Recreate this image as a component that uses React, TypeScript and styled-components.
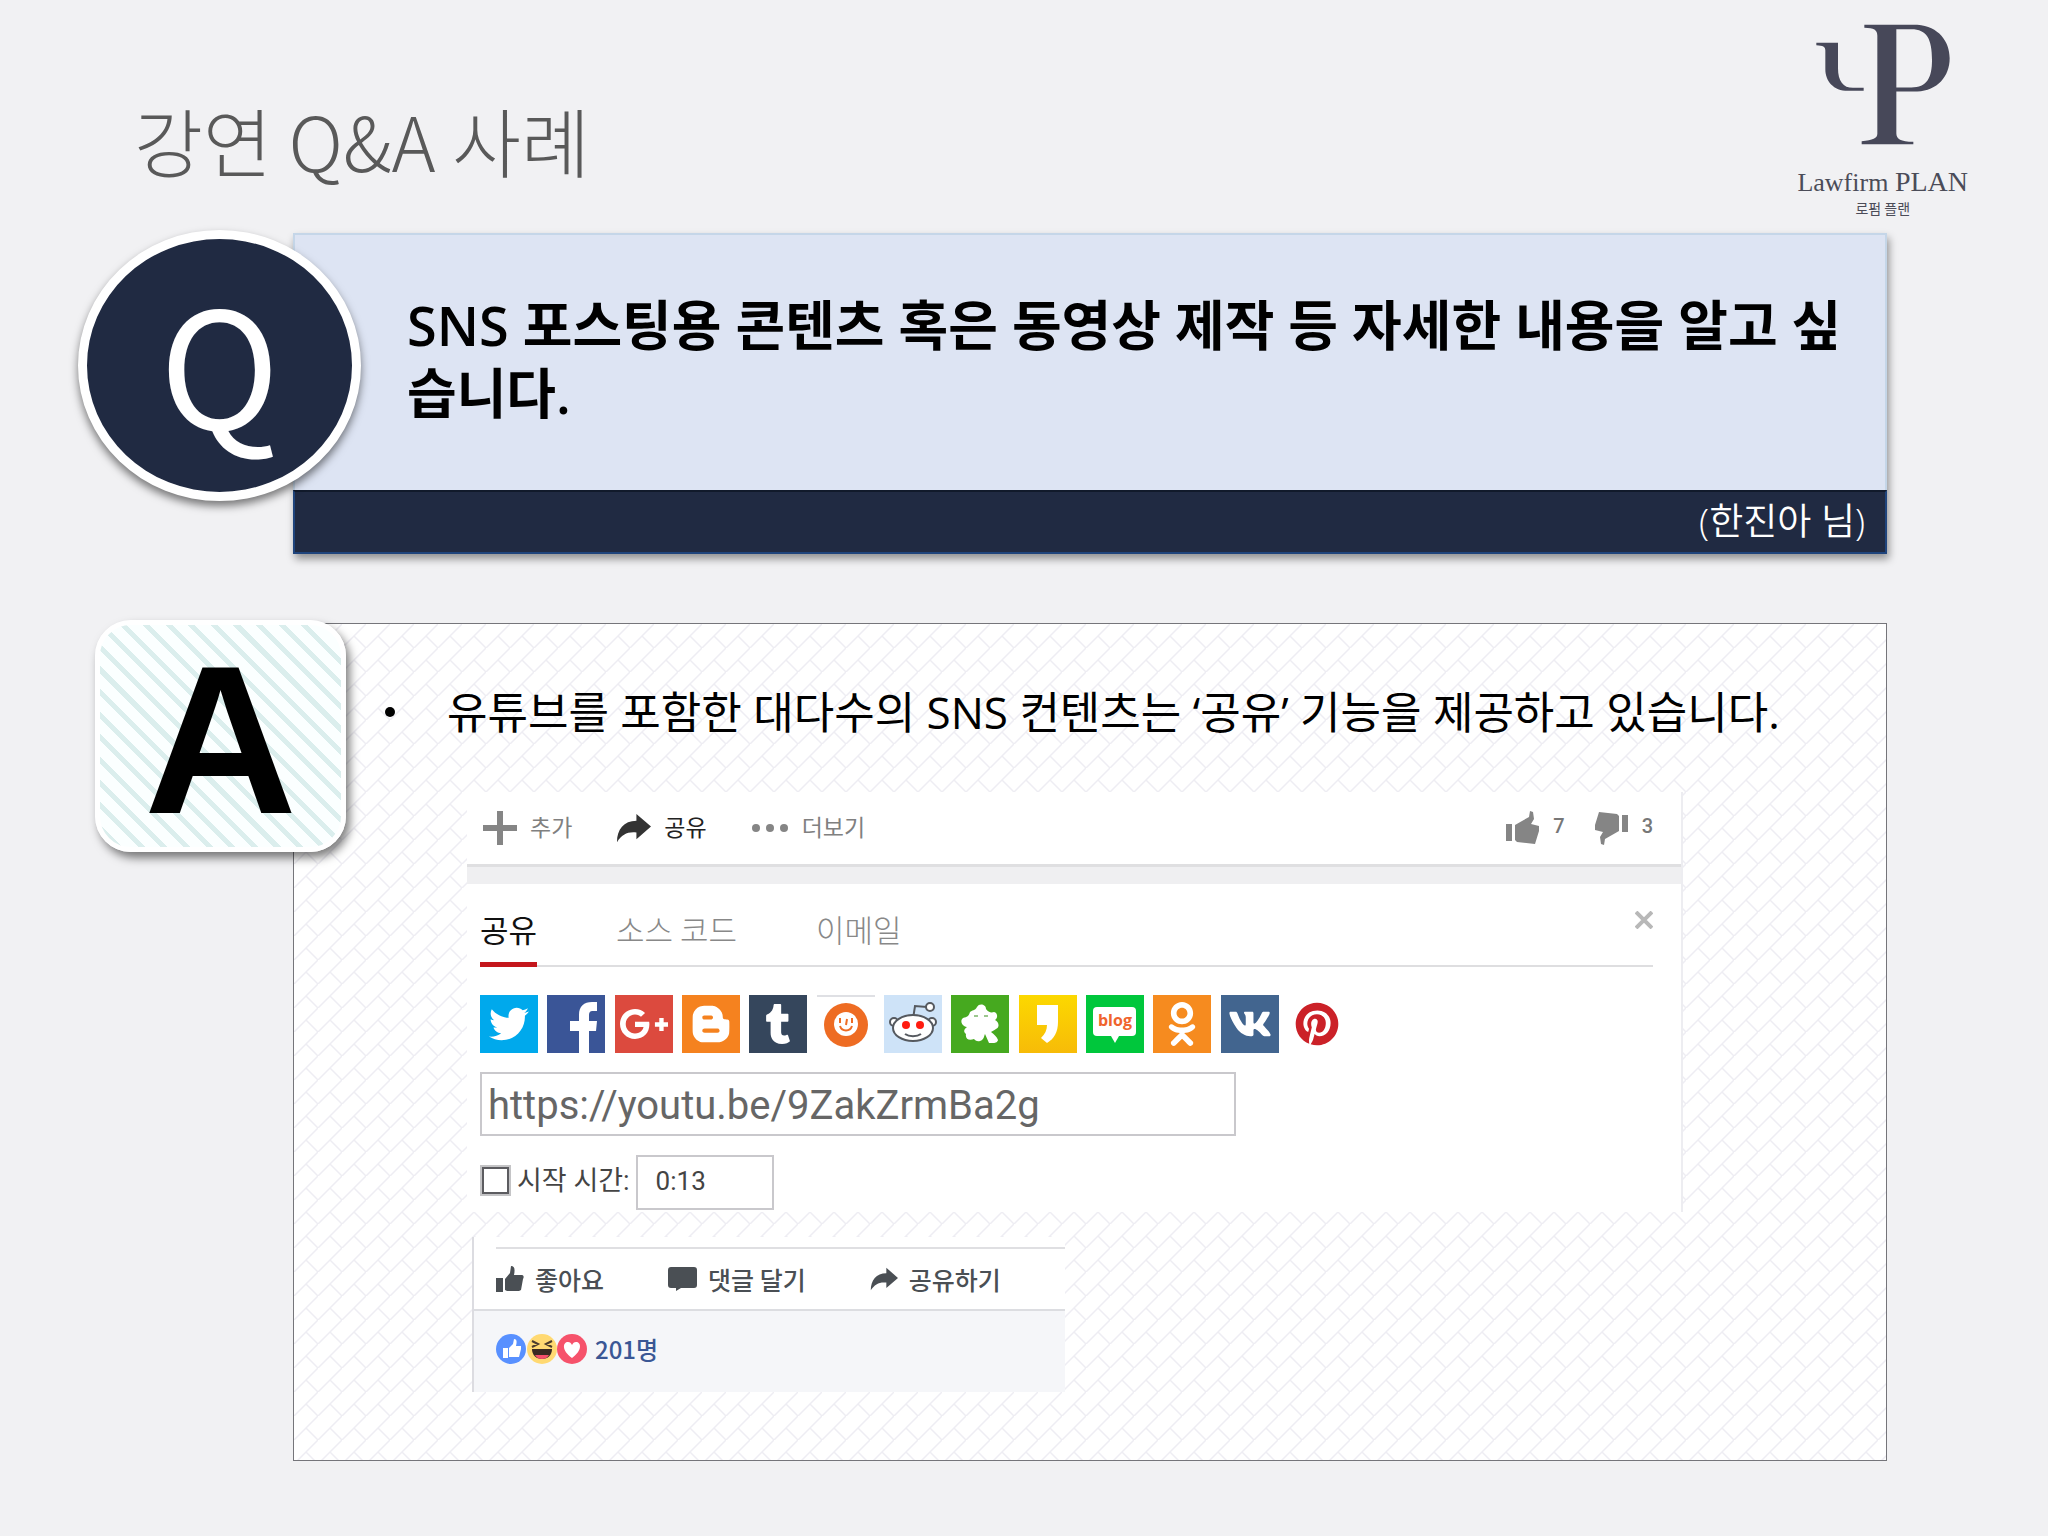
import React from 'react';
import styled, { createGlobalStyle } from 'styled-components';
import {
  FaTwitter,
  FaGooglePlusG,
  FaBloggerB,
  FaTumblr,
  FaOdnoklassniki,
  FaVk,
  FaPinterest,
} from 'react-icons/fa';

const sans = `'Noto Sans CJK KR', sans-serif`;
const humanist = `'Open Sans', 'Noto Sans CJK KR', sans-serif`;
const roboto = `Roboto, 'Noto Sans CJK KR', sans-serif`;

const brick = encodeURIComponent(
  `<svg xmlns="http://www.w3.org/2000/svg" width="24" height="24"><path d="M-2 26L26 -2M12 12L24 24" stroke="#eeedf3" stroke-width="1.5" fill="none"/></svg>`
);

const GlobalStyle = createGlobalStyle`
  *, *::before, *::after { box-sizing: border-box; }
  body { margin: 0; background: #f1f1f3; }
  h1, h2, p, ul { margin: 0; padding: 0; }
  button { border: 0; background: none; padding: 0; margin: 0; cursor: pointer; }
  svg { display: block; flex: none; }
`;

const Page = styled.main`
  display: flex;
  flex-direction: column;
  min-height: 100vh;
  padding-bottom: 75px;
  font-family: ${sans};
  color: #000;
`;

const Header = styled.header`
  display: flex;
  justify-content: space-between;
  align-items: flex-start;
  padding: 0 80px 15px 134px;
`;

const Title = styled.h1`
  padding-top: 90px;
  font-size: 75px;
  line-height: 100px;
  font-weight: 300;
  color: #595959;
`;

const Brand = styled.div`
  display: flex;
  flex-direction: column;
  align-items: center;
  padding-top: 24px;
  color: #4b4c58;
`;

const BrandName = styled.span`
  margin-top: 22px;
  font-family: 'Liberation Serif', serif;
  font-size: 26px;
  line-height: 30px;
`;

const BrandStrong = styled.span`
  font-size: 28px;
`;

const BrandSub = styled.span`
  font-size: 14px;
  line-height: 20px;
`;

const Content = styled.div`
  flex: 1;
  display: flex;
  flex-direction: column;
  gap: 69px;
  padding: 0 161px 0 293px;
`;

const Question = styled.section`
  position: relative;
  box-shadow: 2px 5px 8px rgba(0, 0, 0, 0.4);
`;

const QuestionText = styled.h2`
  padding: 56px 36px 63px 112px;
  border: 2px solid #c5d6e8;
  border-bottom: 0;
  background: #dde4f3;
  font-family: ${humanist};
  font-size: 54px;
  line-height: 68px;
  font-weight: 600;
  word-break: break-all;
`;

const Asker = styled.p`
  padding: 0 20px 2px;
  border: 2px solid #1f447c;
  border-top-color: #111a2b;
  background: #202a42;
  color: #fff;
  font-family: ${humanist};
  font-size: 37px;
  line-height: 58px;
  font-weight: 350;
  text-align: right;
`;

const QBadge = styled.div`
  position: absolute;
  left: -215px;
  top: -3px;
  width: 283px;
  height: 271px;
  display: flex;
  align-items: center;
  justify-content: center;
  padding-bottom: 12px;
  border: 9px solid #fff;
  border-radius: 50%;
  background: #202a42;
  color: #fff;
  font-size: 162px;
  line-height: 1;
  box-shadow: 0 5px 8px rgba(0, 0, 0, 0.5);
`;

const Answer = styled.section`
  position: relative;
  flex: 1;
  padding: 50px 203px 60px 173px;
  border: 1px solid #75757a;
  background: #fff url("data:image/svg+xml,${brick}");
`;

const ABadge = styled.div`
  position: absolute;
  left: -199px;
  top: -4px;
  width: 251px;
  height: 232px;
  display: flex;
  align-items: center;
  justify-content: center;
  padding-top: 8px;
  border: 5px solid #fff;
  border-radius: 36px;
  background: repeating-linear-gradient(45deg, #fbffff 0 11px, #dbeeed 11px 16px);
  font-family: 'Liberation Sans', sans-serif;
  font-size: 212px;
  line-height: 1;
  font-weight: 700;
  box-shadow: 4px 6px 10px rgba(0, 0, 0, 0.5);
`;

const Points = styled.ul`
  list-style: none;
  margin: 0 -140px 0 -82px;
`;

const Point = styled.li`
  display: flex;
  align-items: center;
  font-family: ${humanist};
  font-size: 44px;
  line-height: 76px;
  font-weight: 400;

  &::before {
    content: '';
    flex: none;
    width: 10px;
    height: 10px;
    margin-right: 52px;
    border-radius: 50%;
    background: #000;
  }
`;

const Video = styled.div`
  margin-top: 42px;
  border-right: 2px solid #ededf1;
  background: #fff;
`;

const VideoBar = styled.div`
  display: flex;
  align-items: center;
  justify-content: space-between;
  height: 75px;
  padding: 0 28px 0 16px;
  border-bottom: 3px solid #dfdfe1;
`;

const Group = styled.div<{ $gap: number }>`
  display: flex;
  align-items: center;
  gap: ${(p) => p.$gap}px;
`;

const BarButton = styled.button<{ $dark?: boolean }>`
  display: flex;
  align-items: center;
  gap: 13px;
  font-family: ${sans};
  font-size: 23px;
  line-height: 32px;
  color: ${(p) => (p.$dark ? '#222' : '#808080')};
`;

const Label = styled.span`
  padding-bottom: 5px;
`;

const Count = styled.span`
  padding-bottom: 4px;
  font-family: ${roboto};
  font-size: 20px;
  font-weight: 500;
  color: #777;
`;

const Band = styled.div`
  height: 17px;
  background: #efeff1;
`;

const SharePanel = styled.div`
  padding: 27px 28px 2px 13px;
`;

const Tabs = styled.div`
  display: flex;
  align-items: flex-start;
  gap: 79px;
  box-shadow: inset 0 -2px 0 #dedee0;
`;

const Tab = styled.button<{ $active?: boolean }>`
  padding-bottom: 16px;
  border-bottom: 5px solid ${(p) => (p.$active ? '#c4161c' : 'transparent')};
  font-family: ${sans};
  font-size: 31px;
  line-height: 35px;
  font-weight: ${(p) => (p.$active ? 400 : 300)};
  color: ${(p) => (p.$active ? '#111' : '#888')};
`;

const Close = styled.button`
  margin-left: auto;
  color: #b8b8b8;
`;

const Services = styled.div`
  display: flex;
  justify-content: space-between;
  max-width: 866px;
  margin: 28px 0 19px;
`;

const Service = styled.button<{ $bg: string }>`
  display: flex;
  align-items: center;
  justify-content: center;
  width: 58px;
  height: 58px;
  overflow: hidden;
  background: ${(p) => p.$bg};
  color: #fff;
`;

const BlogBubble = styled.span`
  position: relative;
  width: 43px;
  height: 29px;
  margin-bottom: 6px;
  border-radius: 4px;
  background: #fff;
  color: #f0642d;
  font: 700 16px/27px 'Open Sans', sans-serif;

  &::after {
    content: '';
    position: absolute;
    left: 18px;
    top: 29px;
    border: 4px solid transparent;
    border-top: 7px solid #fff;
    border-bottom: 0;
  }
`;

const UrlInput = styled.input`
  display: block;
  width: 756px;
  height: 64px;
  padding: 2px 6px 0;
  border: 2px solid #c9c8cc;
  background: #fff;
  color: #666;
  font-family: ${roboto};
  font-size: 40px;
`;

const StartRow = styled.div`
  display: flex;
  align-items: center;
  margin-top: 19px;
  color: #444;
  font-family: ${roboto};
  font-size: 27px;
`;

const StartLabel = styled.label`
  padding-bottom: 8px;
`;

const Check = styled.input`
  appearance: none;
  width: 31px;
  height: 31px;
  margin: 0 6px 5px 0;
  border: 2px solid #c4c4c6;
  background: #fff;
  box-shadow: inset 0 0 0 2px #5c5c60;
`;

const TimeInput = styled.input`
  width: 138px;
  height: 55px;
  margin-left: 6px;
  padding: 0 18px 4px;
  border: 2px solid #c9c8cc;
  background: #fff;
  color: #444;
  font-family: ${roboto};
  font-size: 26px;
`;

const Social = styled.div`
  width: 593px;
  margin-top: 25px;
  margin-left: 5px;
  padding-top: 10px;
  border-left: 2px solid #dcdce1;
  background: #fff;
`;

const SocialActions = styled.div`
  display: flex;
  align-items: center;
  gap: 64px;
  height: 62px;
  margin-left: 22px;
  border-top: 2px solid #dfdfe2;
`;

const SocialButton = styled.button`
  display: flex;
  align-items: center;
  gap: 11px;
  color: #4a4f54;
  font-family: ${sans};
  font-size: 25px;
  line-height: 32px;
  font-weight: 500;
`;

const Reactions = styled.div`
  display: flex;
  align-items: center;
  height: 83px;
  padding: 0 21px 6px;
  border-top: 2px solid #dcdde1;
  background: #f5f6f9;
`;

const ReactionCount = styled.a`
  margin-left: 8px;
  color: #3a5795;
  font-size: 24px;
  line-height: 32px;
  font-weight: 500;
  text-decoration: none;
`;

const LogoMark = () => (
  <svg width="134" height="121" viewBox="404 73 402 362" fill="#474859" aria-hidden="true">
    <path
      fillRule="evenodd"
      d="M549 75H708C772 80 805 125 805 175C805 230 768 272 708 275H645V400C645 418 658 425 696 426V433H541V424C575 421 588 416 588 402V108C588 90 578 85 549 84ZM645 88V263H690C737 263 752 235 752 180C752 118 737 88 690 88Z"
    />
    <path d="M405 129H470V205C470 243 485 264 515 264H547V273H500C456 273 432 243 432 208V152C432 140 425 137 405 136Z" />
  </svg>
);

const Plus = () => (
  <svg width="34" height="34" viewBox="0 0 34 34" fill="#858585" aria-hidden="true">
    <path d="M14 0h6v14h14v6H20v14h-6V20H0v-6h14z" />
  </svg>
);

const ShareArrow = ({ width, color }: { width: number; color: string }) => (
  <svg width={width} viewBox="0 0 36 30" fill={color} aria-hidden="true">
    <path d="M21 1L36 14L21 27V20C12 19 6 22 1 30C1 17 8 8 21 8Z" />
  </svg>
);

const Dots = () => (
  <svg width="38" height="10" viewBox="0 0 38 10" fill="#858585" aria-hidden="true">
    <circle cx="5" cy="5" r="4" />
    <circle cx="19" cy="5" r="4" />
    <circle cx="33" cy="5" r="4" />
  </svg>
);

const Thumb = ({ down }: { down?: boolean }) => (
  <svg width="35" height="34" viewBox="0 0 35 34" fill="#858585" aria-hidden="true">
    <g transform={down ? 'rotate(180 17.5 17)' : undefined}>
      <path d="M1 13h6v17H1zM10 14L17 10L24 6L25 0L28 1L29 8L26 13L34 15L34 20L30 33L12 31L10 29Z" />
    </g>
  </svg>
);

const Cross = () => (
  <svg width="18" height="18" viewBox="0 0 18 18" stroke="currentColor" strokeWidth="4" aria-hidden="true">
    <path d="M1 1L17 17M17 1L1 17" />
  </svg>
);

const FacebookF = () => (
  <svg width="58" height="58" viewBox="0 0 58 58" fill="#fff" aria-hidden="true">
    <path d="M32 58V36H23V26H32V20C32 11 37 7 45 7H50V16H46C43 16 42 17 42 21V26H50L49 36H42V58Z" />
  </svg>
);

const OrangeFace = () => (
  <svg width="58" height="58" viewBox="0 0 58 58" aria-hidden="true">
    <path d="M0 1H58" stroke="#dfe0e4" strokeWidth="2" />
    <circle cx="29" cy="30" r="22" fill="#ee6c23" />
    <circle cx="29" cy="29" r="12" fill="#fff" />
    <g stroke="#ee6c23" strokeWidth="2" fill="none">
      <path d="M23 23v5M35 23v5M30 24l-1 6M23 31c2 6 10 6 12 0" />
    </g>
  </svg>
);

const RedditFace = () => (
  <svg width="50" height="44" viewBox="0 0 50 44" aria-hidden="true">
    <g stroke="#55595f" strokeWidth="2" fill="#fff">
      <path d="M25 17L27 4L39 5" fill="none" />
      <circle cx="42" cy="5" r="4" />
      <circle cx="6" cy="20" r="4" />
      <circle cx="44" cy="20" r="4" />
      <ellipse cx="25" cy="26" rx="20" ry="13" />
      <path d="M17 32c4 3 12 3 16 0" fill="none" />
    </g>
    <circle cx="18" cy="23" r="4" fill="#ff1c10" />
    <circle cx="32" cy="23" r="4" fill="#ff1c10" />
  </svg>
);

const Clover = () => (
  <svg width="40" height="42" viewBox="0 0 40 42" aria-hidden="true">
    <path
      fill="#fff"
      d="M17 4C19 0 26 1 26 6C28 9 31 10 34 9C38 10 38 15 35 17C39 19 40 24 36 26C33 28 32 28 31 29C34 31 37 34 38 37C37 41 32 40 29 40L25 31C24 33 24 37 20 38C17 39 15 37 14 36C9 38 5 36 6 31C3 29 4 26 7 24C1 23 0 17 3 15C7 14 9 13 10 9C12 7 15 8 17 4Z"
    />
    <path stroke="#9cc78e" strokeWidth="2" d="M14 13h4M24 13h4" />
  </svg>
);

const StoryMark = () => (
  <svg width="23" height="40" viewBox="0 0 23 40" fill="#fff" aria-hidden="true">
    <path d="M1 1H22V18C22 28 18 35 11 39L5 34C9 30 11 26 11 21H1Z" />
  </svg>
);

const LikeHand = ({ size, color }: { size: number; color: string }) => (
  <svg width={size} viewBox="0 0 28 26" fill={color} aria-hidden="true">
    <path d="M0 12h7v14H0zM9 13L14 7L15 0C19 0 19 4 18 9H26C28 9 28 12 27 13L25 24L23 25H11L9 24Z" />
  </svg>
);

const Comment = () => (
  <svg width="29" height="24" viewBox="0 0 29 24" fill="#4a4f54" aria-hidden="true">
    <path d="M3 0H26Q29 0 29 3V18Q29 21 26 21H13L8 24V21H3Q0 21 0 18V3Q0 0 3 0Z" />
  </svg>
);

const LikeFace = () => (
  <svg width="32" height="32" viewBox="0 0 32 32" aria-hidden="true">
    <circle cx="16" cy="16" r="15" fill="#5890ff" />
    <path fill="#fff" d="M8 15h5v10H8zM14 15l4-4 1-5c3 0 3 3 2 7h5v3l-2 8h-10z" />
  </svg>
);

const HahaFace = () => (
  <svg width="30" height="32" viewBox="0 0 30 32" aria-hidden="true">
    <circle cx="15" cy="16" r="15" fill="#ffd972" />
    <path d="M5 8l6 3-6 3M25 8l-6 3 6 3" stroke="#4b3b2c" strokeWidth="2" fill="none" />
    <path d="M5 16h20c0 6-4 10-10 10S5 22 5 16z" fill="#3a2a22" />
    <path d="M8 22h14c-2 3-4 4-7 4s-5-1-7-4z" fill="#f5506a" />
  </svg>
);

const LoveFace = () => (
  <svg width="30" height="32" viewBox="0 0 30 32" aria-hidden="true">
    <circle cx="15" cy="16" r="15" fill="#f6526b" />
    <path d="M15 25C4 17 6 9 11 9c2 0 3 1 4 3 1-2 2-3 4-3 5 0 7 8-4 16z" fill="#fff" />
  </svg>
);

const services = [
  { name: 'Twitter', bg: '#00a9ec', icon: <FaTwitter size={40} /> },
  { name: 'Facebook', bg: '#3a5597', icon: <FacebookF /> },
  { name: 'Google+', bg: '#dc4a3e', icon: <FaGooglePlusG size={50} /> },
  { name: 'Blogger', bg: '#f5821f', icon: <FaBloggerB size={42} /> },
  { name: 'Tumblr', bg: '#35465c', icon: <FaTumblr size={40} /> },
  { name: 'mixi', bg: '#fff', icon: <OrangeFace /> },
  { name: 'Reddit', bg: '#cee3f8', icon: <RedditFace /> },
  { name: 'Naver Cafe', bg: '#46a91f', icon: <Clover /> },
  { name: 'KakaoStory', bg: 'linear-gradient(#fcd800, #f7bb08)', icon: <StoryMark /> },
  { name: 'Naver Blog', bg: '#00c73c', icon: <BlogBubble>blog</BlogBubble> },
  { name: 'Odnoklassniki', bg: '#f68b1f', icon: <FaOdnoklassniki size={44} /> },
  { name: 'VK', bg: '#42658f', icon: <FaVk size={44} /> },
  { name: 'Pinterest', bg: '#fff', icon: <FaPinterest size={44} color="#cb2128" /> },
];

export default function App() {
  return (
    <>
      <GlobalStyle />
      <Page>
        <Header>
          <Title>강연 Q&amp;A 사례</Title>
          <Brand>
            <LogoMark />
            <BrandName>
              Lawfirm <BrandStrong>PLAN</BrandStrong>
            </BrandName>
            <BrandSub>로펌 플랜</BrandSub>
          </Brand>
        </Header>
        <Content>
          <Question>
            <QuestionText>
              SNS 포스팅용 콘텐츠 혹은 동영상 제작 등 자세한 내용을 알고 싶습니다.
            </QuestionText>
            <Asker>(한진아 님)</Asker>
            <QBadge>Q</QBadge>
          </Question>
          <Answer>
            <ABadge>A</ABadge>
            <Points>
              <Point>유튜브를 포함한 대다수의 SNS 컨텐츠는 ‘공유’ 기능을 제공하고 있습니다.</Point>
            </Points>
            <Video>
              <VideoBar>
                <Group $gap={44}>
                  <BarButton>
                    <Plus />
                    <Label>추가</Label>
                  </BarButton>
                  <BarButton $dark>
                    <ShareArrow width={35} color="#333" />
                    <Label>공유</Label>
                  </BarButton>
                  <BarButton>
                    <Dots />
                    <Label>더보기</Label>
                  </BarButton>
                </Group>
                <Group $gap={29}>
                  <BarButton>
                    <Thumb />
                    <Count>7</Count>
                  </BarButton>
                  <BarButton>
                    <Thumb down />
                    <Count>3</Count>
                  </BarButton>
                </Group>
              </VideoBar>
              <Band />
              <SharePanel>
                <Tabs>
                  <Tab $active>공유</Tab>
                  <Tab>소스 코드</Tab>
                  <Tab>이메일</Tab>
                  <Close aria-label="닫기">
                    <Cross />
                  </Close>
                </Tabs>
                <Services>
                  {services.map((s) => (
                    <Service key={s.name} aria-label={s.name} $bg={s.bg}>
                      {s.icon}
                    </Service>
                  ))}
                </Services>
                <UrlInput aria-label="공유 링크" defaultValue="https://youtu.be/9ZakZrmBa2g" />
                <StartRow>
                  <Check id="start-at" type="checkbox" />
                  <StartLabel htmlFor="start-at">시작 시간:</StartLabel>
                  <TimeInput aria-label="시작 시간" defaultValue="0:13" />
                </StartRow>
              </SharePanel>
            </Video>
            <Social>
              <SocialActions>
                <SocialButton>
                  <LikeHand size={28} color="#4a4f54" />
                  좋아요
                </SocialButton>
                <SocialButton>
                  <Comment />
                  댓글 달기
                </SocialButton>
                <SocialButton>
                  <ShareArrow width={28} color="#4a4f54" />
                  공유하기
                </SocialButton>
              </SocialActions>
              <Reactions>
                <LikeFace />
                <HahaFace />
                <LoveFace />
                <ReactionCount href="#reactions">201명</ReactionCount>
              </Reactions>
            </Social>
          </Answer>
        </Content>
      </Page>
    </>
  );
}
